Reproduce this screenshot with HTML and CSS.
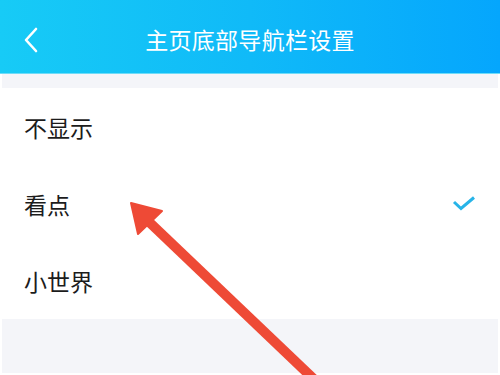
FILE: index.html
```html
<!DOCTYPE html>
<html lang="zh-CN">
<head>
<meta charset="utf-8">
<title>主页底部导航栏设置</title>
<link rel="stylesheet" href="styles.css">
</head>
<body>
<div class="page">
  <header class="topbar">
    <svg class="back" width="16" height="26" viewBox="0 0 16 26"><path d="M13 2 L3 13 L13 24" fill="none" stroke="#fff" stroke-width="2.6" stroke-linecap="round" stroke-linejoin="round"/></svg>
    <h1 class="title">主页底部导航栏设置</h1>
  </header>
  <div class="gap"></div>
  <ul class="options">
    <li class="option"><span>不显示</span></li>
    <li class="option"><span>看点</span>
      <svg class="check" width="24" height="16" viewBox="0 0 24 16"><path d="M2 6 L9 12.5 L22 1.5" fill="none" stroke="#27b4e8" stroke-width="3" stroke-linejoin="miter"/></svg>
    </li>
    <li class="option"><span>小世界</span></li>
  </ul>
  <div class="footer"></div>
  <svg class="arrow" width="500" height="375" viewBox="0 0 500 375">
    <line x1="147" y1="220" x2="320" y2="385" stroke="#ee4a36" stroke-width="10"/>
    <polygon points="131,203 162,211 138,234" fill="#ee4a36" stroke="#ee4a36" stroke-width="2" stroke-linejoin="round"/>
  </svg>
</div>
</body>
</html>
```

FILE: styles.css
```css
* { box-sizing: border-box; }
html, body { margin: 0; padding: 0; background: #ffffff; }
.page {
  position: relative;
  width: 500px;
  height: 375px;
  overflow: hidden;
  font-family: "Noto Sans CJK SC", "Noto Sans", sans-serif;
  display: flex;
  flex-direction: column;
}
.topbar {
  height: 74px;
  flex: none;
  display: flex;
  align-items: center;
  justify-content: center;
  position: relative;
  padding-top: 4px;
  background: linear-gradient(90deg, #17cbf6 0%, #10baf8 50%, #05a6fd 100%);
  border-bottom: 1px solid #6fdcf8;
}
.back { position: absolute; left: 23px; top: 27px; }
.title {
  margin: 0;
  color: #fff;
  font-weight: 400;
  font-size: 23px;
  letter-spacing: 0.3px;
}
.gap { height: 14px; flex: none; background: #f4f5f9; margin: 0 2px; }
.options { list-style: none; margin: 0; padding: 0; background: #fff; }
.option {
  height: 77px;
  display: flex;
  align-items: center;
  justify-content: space-between;
  padding: 0 24px 0 24px;
  font-size: 23px;
  color: #1c1c1c;
}
.footer { flex: 1; background: #f4f5f9; margin: 0 2px 2px; }
.arrow { position: absolute; left: 0; top: 0; pointer-events: none; }
```
